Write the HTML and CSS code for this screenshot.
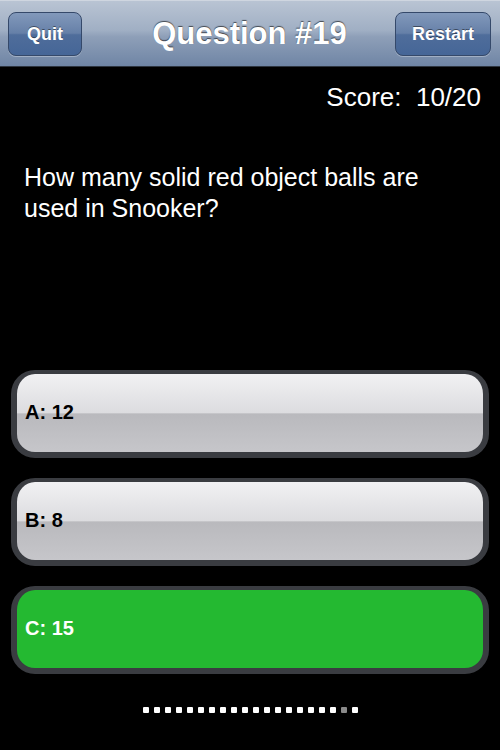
FILE: index.html
```html
<!DOCTYPE html>
<html lang="en">
<head>
    <meta charset="UTF-8">
    <meta name="viewport" content="width=device-width, initial-scale=1">
    <title>Quiz - Question #19</title>
    <link rel="stylesheet" href="styles.css">
</head>
<body>
    <header class="nav-bar">
        <button class="nav-btn quit-btn">Quit</button>
        <h1 class="nav-title">Question #19</h1>
        <button class="nav-btn restart-btn">Restart</button>
    </header>

    <div class="score">Score:&nbsp; 10/20</div>

    <p class="question">How many solid red object balls are used in Snooker?</p>

    <div class="answers">
        <button class="answer">A: 12</button>
        <button class="answer">B: 8</button>
        <button class="answer correct">C: 15</button>
    </div>

    <div class="progress">
        <span class="dot"></span><span class="dot"></span><span class="dot"></span><span class="dot"></span>
        <span class="dot"></span><span class="dot"></span><span class="dot"></span><span class="dot"></span>
        <span class="dot"></span><span class="dot"></span><span class="dot"></span><span class="dot"></span>
        <span class="dot"></span><span class="dot"></span><span class="dot"></span><span class="dot"></span>
        <span class="dot"></span><span class="dot"></span><span class="dot current"></span><span class="dot"></span>
    </div>
</body>
</html>
```

FILE: styles.css
```css
body {
    margin: 0;
    background-color: #000;
    font-family: "Liberation Sans", Arial, sans-serif;
    color: #fff;
}

.nav-bar {
    height: 65px;
    display: grid;
    grid-template-columns: 1fr auto 1fr;
    align-items: center;
    padding: 0 9px 0 8px;
    background: linear-gradient(to bottom, #b9c4d3 0%, #a0afc4 45%, #8e9fb8 55%, #6f85a5 100%);
    border-top: 1px solid #cfd6e0;
    border-bottom: 1px solid #2d3540;
}

.nav-title {
    margin: 0;
    font-size: 31px;
    font-weight: bold;
    color: #fff;
    text-shadow: 0 -1px 1px rgba(0, 0, 0, 0.6);
}

.nav-btn {
    height: 44px;
    padding: 0;
    margin-top: 1px;
    font-family: inherit;
    font-size: 18px;
    font-weight: bold;
    color: #fff;
    text-shadow: 0 -1px 0 rgba(0, 0, 0, 0.45);
    background: linear-gradient(to bottom, #8299bb 0%, #6680a8 48%, #4f6d9b 52%, #456697 100%);
    border: 1px solid #35496a;
    border-radius: 8px;
    box-shadow: 0 1px 0 rgba(255, 255, 255, 0.3);
}

.quit-btn {
    width: 74px;
    justify-self: start;
}

.restart-btn {
    width: 96px;
    justify-self: end;
}

.score {
    margin-top: 15px;
    padding-right: 19px;
    text-align: right;
    font-size: 26px;
    line-height: 30px;
}

.question {
    margin: 50px 0 0;
    padding: 0 40px 0 24px;
    font-size: 25px;
    line-height: 31px;
}

.answers {
    margin-top: 146px;
    padding: 0 11px;
    display: flex;
    flex-direction: column;
    gap: 20px;
}

.answer {
    height: 88px;
    padding: 0 0 2px 8px;
    text-align: left;
    font-family: inherit;
    font-size: 20px;
    font-weight: bold;
    color: #000;
    border-style: solid;
    border-color: #3a3c41;
    border-width: 4px 6px 6px 6px;
    border-radius: 24px;
    background: linear-gradient(to bottom, #f1f1f3 0%, #dcdcdf 50%, #b9b9bd 51%, #c6c6ca 100%);
}

.answer.correct {
    color: #fff;
    background: #24b931;
}

.progress {
    margin-top: 33px;
    display: flex;
    justify-content: center;
    gap: 5px;
}

.dot {
    width: 6px;
    height: 6px;
    background-color: #fff;
    border-radius: 1px;
}

.dot.current {
    background-color: #8a8a8a;
}
```
